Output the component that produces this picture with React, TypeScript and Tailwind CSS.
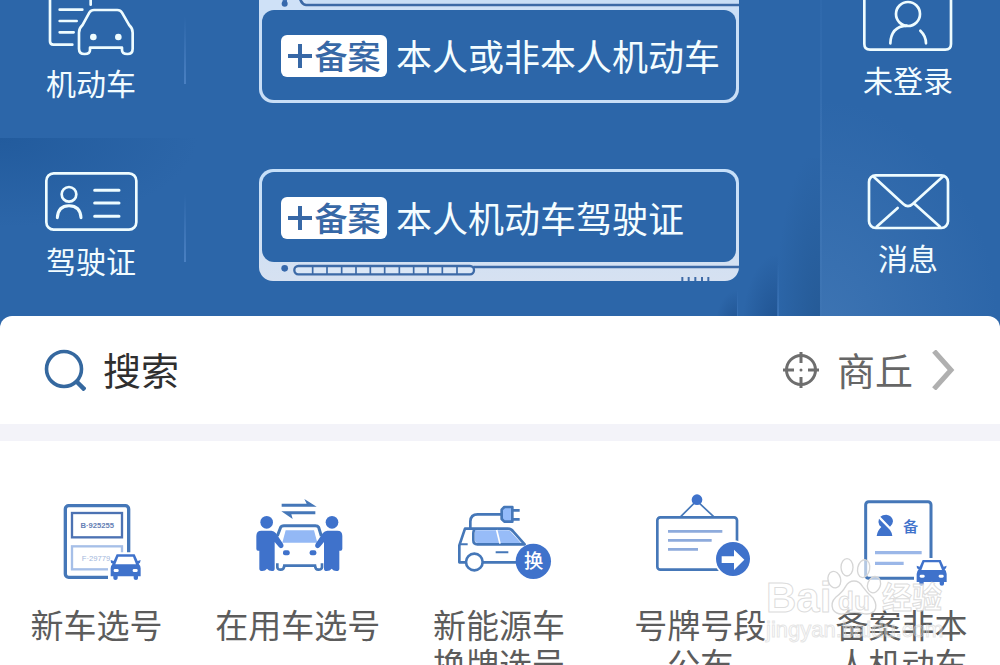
import type { ReactNode } from 'react'

const BLUE = '#3f72cb'
const EDGE = '#4577b8'

function VehicleIcon() {
  return (
    <svg viewBox="135 0 276 162" className="h-[54px] w-[92px] overflow-visible" fill="none" stroke="#eefcff" strokeWidth="8" strokeLinecap="round" strokeLinejoin="round" aria-hidden="true">
      <path d="M150 -4V124Q150 134 160 134H217M272 -4V14M179 29H247M179 63H230M179 97H221" />
      <path d="M268 38Q273 30 282 30H352Q361 30 366 38L388 76Q398 85 398 98V146Q398 162 382 162Q366 162 366 150V143H270V150Q270 162 254 162Q237 162 237 146V98Q237 85 247 76Z" />
      <circle cx="280" cy="111" r="6" fill="#eefcff" />
      <circle cx="355" cy="111" r="6" fill="#eefcff" />
    </svg>
  )
}

function LicenseIcon() {
  return (
    <svg viewBox="135 516 276 180" className="h-[60px] w-[92px] overflow-visible" fill="none" stroke="#eefcff" strokeWidth="8" strokeLinecap="round" aria-hidden="true">
      <rect x="139" y="520" width="270" height="169" rx="22" />
      <circle cx="207" cy="583" r="22" />
      <path d="M172 653Q174 617 207 617Q241 617 243 653M284 571H357M284 609H357M284 649H357" strokeWidth="9" />
    </svg>
  )
}

function AccountIcon() {
  return (
    <svg viewBox="336 0 276 153" className="h-[51px] w-[92px]" fill="none" stroke="#eefcff" strokeWidth="8" strokeLinecap="round" aria-hidden="true">
      <path d="M343 -4V132Q343 149 360 149H586Q603 149 603 132V-4" />
      <circle cx="474" cy="42" r="36" />
      <path d="M421 130Q423 80 470 77M511 92Q528 108 528 130" />
    </svg>
  )
}

function MailIcon() {
  return (
    <svg viewBox="336 507 276 180" className="h-[60px] w-[92px] overflow-visible" fill="none" stroke="#eefcff" strokeWidth="8" strokeLinecap="round" aria-hidden="true">
      <rect x="357" y="526" width="237" height="158" rx="20" />
      <path d="M371 530L460 612Q474 625 488 612L578 530M443 624L380 680M494 612L570 680" />
    </svg>
  )
}

function NavItem({ icon, label }: { icon: ReactNode; label: string }) {
  return (
    <button type="button" className="flex w-[92px] flex-col items-center gap-2 whitespace-nowrap text-[30px] leading-10 text-[#f2fcff]">
      {icon}
      {label}
    </button>
  )
}

function Divider() {
  return <span className="mb-[18px] h-[68px] w-[2px] self-end bg-gradient-to-b from-[#3f77bb]/0 to-[#4a80c2]" />
}

function Banner({ text }: { text: string }) {
  return (
    <button type="button" className="mx-[3px] flex h-[90px] items-center gap-[9px] rounded-xl bg-[#2c66a9] pl-[19px] pt-[2px]">
      <span className="flex h-[42px] w-[106px] items-center justify-center gap-[3px] rounded-md bg-white text-[33px] font-medium leading-10 text-[#3768a6]">
        <svg viewBox="0 0 24 24" className="size-6" stroke="#3768a6" strokeWidth="4" aria-hidden="true">
          <path d="M0 12H24M12 0V24" />
        </svg>
        <span className="pb-[2px]">备案</span>
      </span>
      <span className="whitespace-nowrap pb-[2px] text-4xl leading-[42px] text-[#f4fdff]">{text}</span>
    </button>
  )
}

const SLOTS = [188, 231, 275, 318, 361, 404, 448, 491, 534, 577, 621]
const TICKS = [1297, 1316, 1336, 1356, 1375]

function FrameTop() {
  return (
    <svg viewBox="27 0 1440 30" preserveAspectRatio="none" className="block h-[10px] w-full" aria-hidden="true">
      <path d="M27 0H1467V30H27Z" fill="#cfe1f7" />
      <path d="M98 0H111V10H98Z" fill="#4573b4" />
      <circle cx="104" cy="11" r="9" fill="#3768ab" />
      <path d="M150 -4Q156 14 168 15H1467" fill="none" stroke="#3c69a6" strokeWidth="8" />
      <path d="M172 -2H1467V9H172Z" fill="#c9def6" />
    </svg>
  )
}

function FrameFoot() {
  return (
    <svg viewBox="27 306 1440 57" preserveAspectRatio="none" className="block h-[19px] w-full" aria-hidden="true">
      <path d="M670 321H1467" stroke="#3c69a6" strokeWidth="8" />
      <circle cx="104" cy="325" r="10" fill="#3768ab" />
      <rect x="133" y="318" width="539" height="25" rx="12" fill="#dbe7f6" stroke="#3d6aa7" strokeWidth="7" />
      {SLOTS.map((x) => (
        <path key={x} d={`M${x} 318V343`} stroke="#3d6aa7" strokeWidth="5" />
      ))}
      {TICKS.map((x) => (
        <path key={x} d={`M${x} 351V363`} stroke="#3d6aa7" strokeWidth="6" />
      ))}
    </svg>
  )
}

function MiniCar({ x, y }: { x: number; y: number }) {
  return (
    <g transform={`translate(${x} ${y})`}>
      <path d="M10 -6H80L98 12V84H-8V30Z" fill="#fff" />
      <path d="M18 0H72L81 20L90 17L88 25L84 28Q90 34 90 42V66H82V72Q82 77 76 77Q69 77 69 72V66H21V72Q21 77 14 77Q8 77 8 72V66H0V42Q0 34 6 28L1 25L0 17L9 20Z" fill={BLUE} />
      <path d="M23 7H67L76 30H14Z" fill="#fff" />
      <rect x="9" y="44" width="15" height="9" rx="4" fill="#fff" />
      <rect x="66" y="44" width="15" height="9" rx="4" fill="#fff" />
    </g>
  )
}

function NewPlateIcon() {
  return (
    <svg viewBox="81 30 300 300" className="size-[100px]" fill="none" aria-hidden="true">
      <rect x="136" y="77" width="190" height="215" rx="10" stroke={EDGE} strokeWidth="10" />
      <rect x="156" y="99" width="150" height="73" stroke="#4c72b3" strokeWidth="7" />
      <rect x="156" y="199" width="150" height="69" stroke="#a6bfe8" strokeWidth="7" />
      <text x="232" y="143" textAnchor="middle" fontSize="23" fontWeight="700" fill="#6681b5" fontFamily="Liberation Sans, sans-serif">B·925255</text>
      <text x="228" y="242" textAnchor="middle" fontSize="23" fill="#a3b8dc" fontFamily="Liberation Sans, sans-serif">F·29779</text>
      <MiniCar x={272} y={223} />
    </svg>
  )
}

function Person({ flip = false }: { flip?: boolean }) {
  return (
    <g transform={flip ? 'translate(536 0) scale(-1 1)' : undefined} fill={BLUE}>
      <circle cx="170" cy="127" r="19" />
      <path d="M139 168Q139 152 154 152H184Q192 152 198 160L219 191Q223 199 217 203Q211 207 206 200L194 186V266Q194 273 186 273Q176 273 171 266Q166 273 157 273Q148 273 148 266V212H144Q139 212 139 206Z" />
    </g>
  )
}

function SwapIcon() {
  return (
    <svg viewBox="114 30 300 300" className="size-[100px]" fill="none" aria-hidden="true">
      <path d="M215 71H290L283 57L320 80H215ZM316 103H244L248 117L214 94H316Z" fill={EDGE} />
      <path d="M202 168L212 142Q214 137 222 137H316Q323 137 326 142L334 168" stroke={EDGE} strokeWidth="9" />
      <path d="M227 151H312L322 188H217Z" fill="#93b8f5" />
      <path d="M202 250V262Q203 269 212 269Q222 269 223 257H315Q316 269 325 269Q335 269 336 262V250" stroke={EDGE} strokeWidth="8" />
      <rect x="219" y="211" width="20" height="15" rx="6" fill={BLUE} />
      <rect x="299" y="211" width="20" height="15" rx="6" fill={BLUE} />
      <Person />
      <Person flip />
    </svg>
  )
}

function EnergyIcon() {
  return (
    <svg viewBox="87 30 300 300" className="size-[100px] overflow-visible" fill="none" stroke={EDGE} strokeWidth="8" aria-hidden="true">
      <path d="M151 144V124Q152 103 173 103H244" />
      <path d="M277 91H299M277 118H299" />
      <path d="M253 81H277V125H253L245 117V89Z" fill="#93bbfb" strokeLinejoin="round" />
      <path d="M289 247H188M138 247H118V196L135 146H263Q274 146 280 155L314 193H172Q160 193 160 181V160Q160 146 172 146" strokeLinejoin="round" />
      <path d="M165 151H262Q270 151 275 158L303 189H174Q165 189 165 181Z" fill="#97bcf8" stroke="none" />
      <path d="M230 150L240 191" stroke="#fff" strokeWidth="5" />
      <path d="M120 193H143M227 217H265" strokeWidth="6" />
      <circle cx="163" cy="246" r="25" fill="#fff" />
      <circle cx="340" cy="244" r="53" fill={BLUE} stroke="none" />
      <text x="341" y="265" textAnchor="middle" fontSize="58" fontWeight="500" fill="#fff" stroke="none">换</text>
    </svg>
  )
}

function NoticeIcon() {
  return (
    <svg viewBox="90 30 300 300" className="size-[100px] overflow-visible" fill="none" stroke={EDGE} strokeWidth="8" aria-hidden="true">
      <path d="M182 110L230 62L281 110" strokeWidth="5" />
      <circle cx="231" cy="59" r="16" fill={BLUE} stroke="none" />
      <rect x="112" y="112" width="239" height="157" rx="9" />
      <path d="M144 154H307M144 181H275M144 208H234" stroke="#8eabdc" />
      <circle cx="339" cy="237" r="56" fill="#fff" stroke="none" />
      <circle cx="339" cy="237" r="51" fill={BLUE} stroke="none" />
      <path d="M305 229H342V209L373 239L342 270V249H305Z" fill="#fff" stroke="none" />
    </svg>
  )
}

function RecordIcon() {
  return (
    <svg viewBox="273 30 300 300" className="size-[100px]" fill="none" aria-hidden="true">
      <rect x="314" y="65" width="196" height="230" rx="9" stroke={EDGE} strokeWidth="9" />
      <path d="M358 110L387 140Q396 132 396 124Q394 106 376 104Q364 104 358 110ZM354 116Q350 126 355 136L361 141Q349 152 347 168H394Q393 158 387 150Z" fill={BLUE} />
      <text x="449" y="155" textAnchor="middle" fontSize="46" fontWeight="500" fill={BLUE}>备</text>
      <path d="M342 218H482M342 250H428" stroke="#9bb7e8" strokeWidth="10" />
      <MiniCar x={467} y={240} />
    </svg>
  )
}

const SERVICES: { lines: string[]; icon: ReactNode }[] = [
  { lines: ['新车选号'], icon: <NewPlateIcon /> },
  { lines: ['在用车选号'], icon: <SwapIcon /> },
  { lines: ['新能源车', '换牌选号'], icon: <EnergyIcon /> },
  { lines: ['号牌号段', '公布'], icon: <NoticeIcon /> },
  { lines: ['备案非本', '人机动车'], icon: <RecordIcon /> },
]

function Watermark() {
  return (
    <div className="pointer-events-none absolute right-[54px] top-[116px] h-[90px] w-[180px] font-['Liberation_Sans','Noto_Sans_CJK_SC',sans-serif] text-white/50 [-webkit-text-stroke:1px_#d4d4d4cc]">
      <svg viewBox="18 231 540 270" className="absolute inset-0 size-full" fill="#fff" fillOpacity="0.6" stroke="#d6d6d6" strokeWidth="4" aria-hidden="true">
        <ellipse cx="223" cy="299" rx="19" ry="25" transform="rotate(-15 223 299)" />
        <ellipse cx="261" cy="262" rx="18" ry="26" />
        <ellipse cx="311" cy="266" rx="18" ry="27" transform="rotate(12 311 266)" />
        <ellipse cx="342" cy="314" rx="19" ry="25" transform="rotate(20 342 314)" />
        <path d="M282 303Q298 303 308 320Q322 340 340 355Q354 378 343 393Q330 406 306 400Q282 394 256 401Q230 406 219 389Q210 368 228 351Q248 336 257 319Q266 303 282 303Z" />
      </svg>
      <span className="absolute left-0 top-5 text-[42px] font-bold leading-[42px]">Bai</span>
      <span className="absolute left-[72px] top-[31px] text-[26px] font-bold leading-[26px]">du</span>
      <span className="absolute left-[116px] top-[26px] whitespace-nowrap text-[30px] font-bold leading-[30px]">经验</span>
      <span className="absolute left-0 top-[60px] text-[22px] leading-[26px] text-white/20 [-webkit-text-stroke:1px_#d4d4d499]">jingyan.baidu.com</span>
    </div>
  )
}

export default function App() {
  return (
    <div className="h-screen overflow-hidden bg-white font-['Noto_Sans_CJK_SC','Noto_Sans',sans-serif]">
      <header className="relative grid grid-cols-[186px_1fr_188px] bg-[#2c66a9] pb-[47px]">
        <div className="pointer-events-none absolute inset-0 overflow-hidden" aria-hidden="true">
          <div className="absolute left-0 top-[138px] h-[90px] w-[200px] bg-[radial-gradient(ellipse_at_top_left,#225b9d,transparent_70%)]" />
          <div className="absolute bottom-0 right-[180px] h-[170px] w-[43px] bg-[radial-gradient(ellipse_at_bottom_right,#255a96,transparent_75%)]" />
          <div className="absolute bottom-0 right-[222px] h-[75px] w-[36px] bg-[radial-gradient(ellipse_at_bottom_right,#1f5290,transparent_70%)]" />
          <div className="absolute bottom-0 right-[263px] h-[38px] w-[22px] bg-[radial-gradient(ellipse_at_bottom_right,#1f5290,transparent_70%)]" />
          <div className="absolute bottom-0 right-[221px] h-[66px] w-[2px] bg-gradient-to-t from-[#3f78bc] to-transparent" />
          <div className="absolute bottom-0 right-[262px] h-[38px] w-px bg-gradient-to-t from-[#3f78bc] to-transparent" />
          <div className="absolute inset-y-0 right-[178px] w-[2px] bg-gradient-to-t from-[#4279b9] to-[#2f69ac]" />
          <div className="absolute bottom-0 right-0 h-[230px] w-[180px] bg-[radial-gradient(ellipse_at_bottom_left,#3d74b3,transparent_70%)]" />
        </div>

        <nav aria-label="证件" className="relative flex flex-col gap-[70px] pl-[45px]">
          <div className="flex justify-between">
            <NavItem icon={<VehicleIcon />} label="机动车" />
            <Divider />
          </div>
          <div className="flex justify-between">
            <NavItem icon={<LicenseIcon />} label="驾驶证" />
            <Divider />
          </div>
        </nav>

        <div className="relative mx-auto flex w-full max-w-[480px] flex-col gap-[66px]">
          <div className="flex flex-col overflow-hidden rounded-b-[14px] bg-[#c9def6] pb-[3px]">
            <FrameTop />
            <Banner text="本人或非本人机动车" />
          </div>
          <div className="flex flex-col overflow-hidden rounded-[14px] bg-gradient-to-b from-[#c5dff9] to-[#d6e1f1] pt-[3px]">
            <Banner text="本人机动车驾驶证" />
            <FrameFoot />
          </div>
        </div>

        <nav aria-label="账户" className="relative flex flex-col items-end gap-[70px] pr-[46px]">
          <NavItem icon={<AccountIcon />} label="未登录" />
          <NavItem icon={<MailIcon />} label="消息" />
        </nav>
      </header>

      <main className="relative -mt-3 rounded-t-xl bg-white">
        <div className="flex h-[108px] items-center justify-between pl-11 pr-[45px]">
          <button type="button" className="flex items-center gap-[17px] text-[38px] leading-[42px] text-[#2f2f2f]">
            <svg viewBox="0 0 42 42" className="size-[42px]" fill="none" stroke="#35689f" strokeWidth="3.6" aria-hidden="true">
              <circle cx="20" cy="20" r="17.5" />
              <path d="M32 32L41 41" strokeWidth="4.5" />
            </svg>
            <span className="pb-[2px]">搜索</span>
          </button>
          <button type="button" className="flex items-center text-[38px] leading-[42px] text-[#666]">
            <svg viewBox="0 0 36 36" className="mr-[18px] size-9" fill="none" stroke="#6e6e6e" strokeWidth="3" aria-hidden="true">
              <circle cx="18" cy="18" r="14.5" />
              <path d="M18 0V11M18 25V36M0 18H11M25 18H36" />
              <circle cx="18" cy="18" r="1.5" fill="#6e6e6e" stroke="none" />
            </svg>
            <span className="pb-[2px]">商丘</span>
            <svg viewBox="0 0 24 40" className="ml-[18px] h-10 w-6" fill="none" stroke="#b0b0b0" strokeWidth="5" aria-hidden="true">
              <path d="M3 1L20 20L3 39" />
            </svg>
          </button>
        </div>

        <div className="h-[17px] bg-[#f3f3f9]" />

        <section className="relative flex items-start justify-between pl-[14px] pr-4 pt-[49px]">
          {SERVICES.map((service) => (
            <button key={service.lines[0]} type="button" className="flex w-[165px] flex-col items-center gap-[15px] text-[33px] leading-[39px] text-[#5c5c5c]">
              {service.icon}
              <span className="flex flex-col whitespace-nowrap">
                {service.lines.map((line) => (
                  <span key={line}>{line}</span>
                ))}
              </span>
            </button>
          ))}
          <Watermark />
        </section>
      </main>
    </div>
  )
}
